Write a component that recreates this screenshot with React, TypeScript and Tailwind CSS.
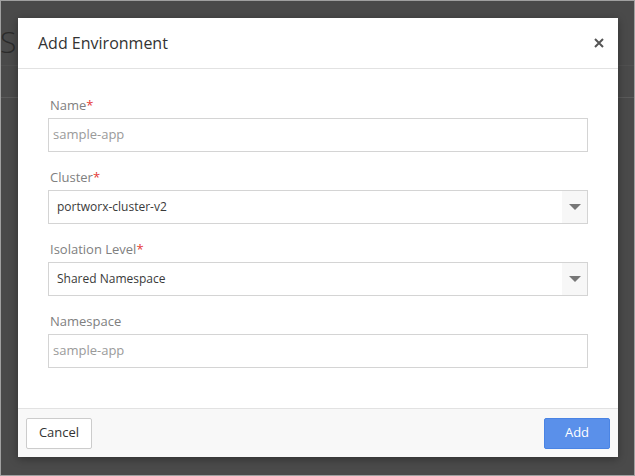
import React from 'react';

const font = { fontFamily: '"Open Sans", "Noto Sans", Arial, sans-serif' };

const Label: React.FC<{ text: string; required?: boolean }> = ({ text, required }) => (
  <div className="text-[13px] leading-[18px] text-[#808080] mb-[4px] pl-[2px]">
    {text}
    {required && <span className="text-[#e53935]">*</span>}
  </div>
);

const TextInput: React.FC<{ placeholder: string }> = ({ placeholder }) => (
  <div className="h-[34px] border border-[#d4d4d4] bg-white flex items-center pl-[4px] text-[13px] text-[#9a9a9a]">
    {placeholder}
  </div>
);

const Select: React.FC<{ value: string }> = ({ value }) => (
  <div className="h-[34px] border border-[#d4d4d4] bg-white flex items-stretch">
    <div className="flex-1 flex items-center pl-[8px] text-[12px] text-[#3a3a3a]">{value}</div>
    <div className="w-[25px] bg-[#f7f7f7] flex items-center justify-center">
      <svg width="12" height="6" viewBox="0 0 12 6">
        <path d="M0 0 H12 L6 6 Z" fill="#777" />
      </svg>
    </div>
  </div>
);

export default function App() {
  return (
    <div className="relative w-[635px] h-[476px] border border-[#a0a0a0] bg-[#4a4a4a] overflow-hidden" style={font}>
      {/* dimmed page behind the modal */}
      <div className="absolute inset-0">
        <div className="h-[64px] pt-[16px] flex items-center">
          <span className="text-[30px] font-light text-[#2b2b2b] -ml-[1px]">S</span>
        </div>
        <div className="h-[32px] border-t border-[#505050]" />
        <div className="border-t border-[#5a5a5a]" />
      </div>

      <div className="absolute left-[17px] top-[17px] w-[600px] h-[439px] bg-white flex flex-col shadow-[0_2px_8px_rgba(0,0,0,0.35)]">
        <div className="h-[51px] border-b border-[#e2e2e2] flex items-center justify-between pl-[20px] pr-[14px]">
          <div className="text-[16px] text-[#333]">Add Environment</div>
          <svg width="10" height="10" viewBox="0 0 10 10">
            <path d="M1 1 L9 9 M9 1 L1 9" stroke="#555" strokeWidth="2" />
          </svg>
        </div>

        <div className="flex-1 px-[30px] pt-[27px] flex flex-col gap-[16px]">
          <div>
            <Label text="Name" required />
            <TextInput placeholder="sample-app" />
          </div>
          <div>
            <Label text="Cluster" required />
            <Select value="portworx-cluster-v2" />
          </div>
          <div>
            <Label text="Isolation Level" required />
            <Select value="Shared Namespace" />
          </div>
          <div>
            <Label text="Namespace" />
            <TextInput placeholder="sample-app" />
          </div>
        </div>

        <div className="h-[49px] border-t border-[#e2e2e2] bg-[#f8f8f8] flex items-center justify-between px-[8px]">
          <button className="w-[66px] h-[31px] border border-[#ccc] bg-white rounded-[2px] text-[13px] text-[#333]">
            Cancel
          </button>
          <button className="w-[66px] h-[31px] border border-[#4a84e4] bg-[#5a90ea] rounded-[2px] text-[13px] text-white">
            Add
          </button>
        </div>
      </div>
    </div>
  );
}
